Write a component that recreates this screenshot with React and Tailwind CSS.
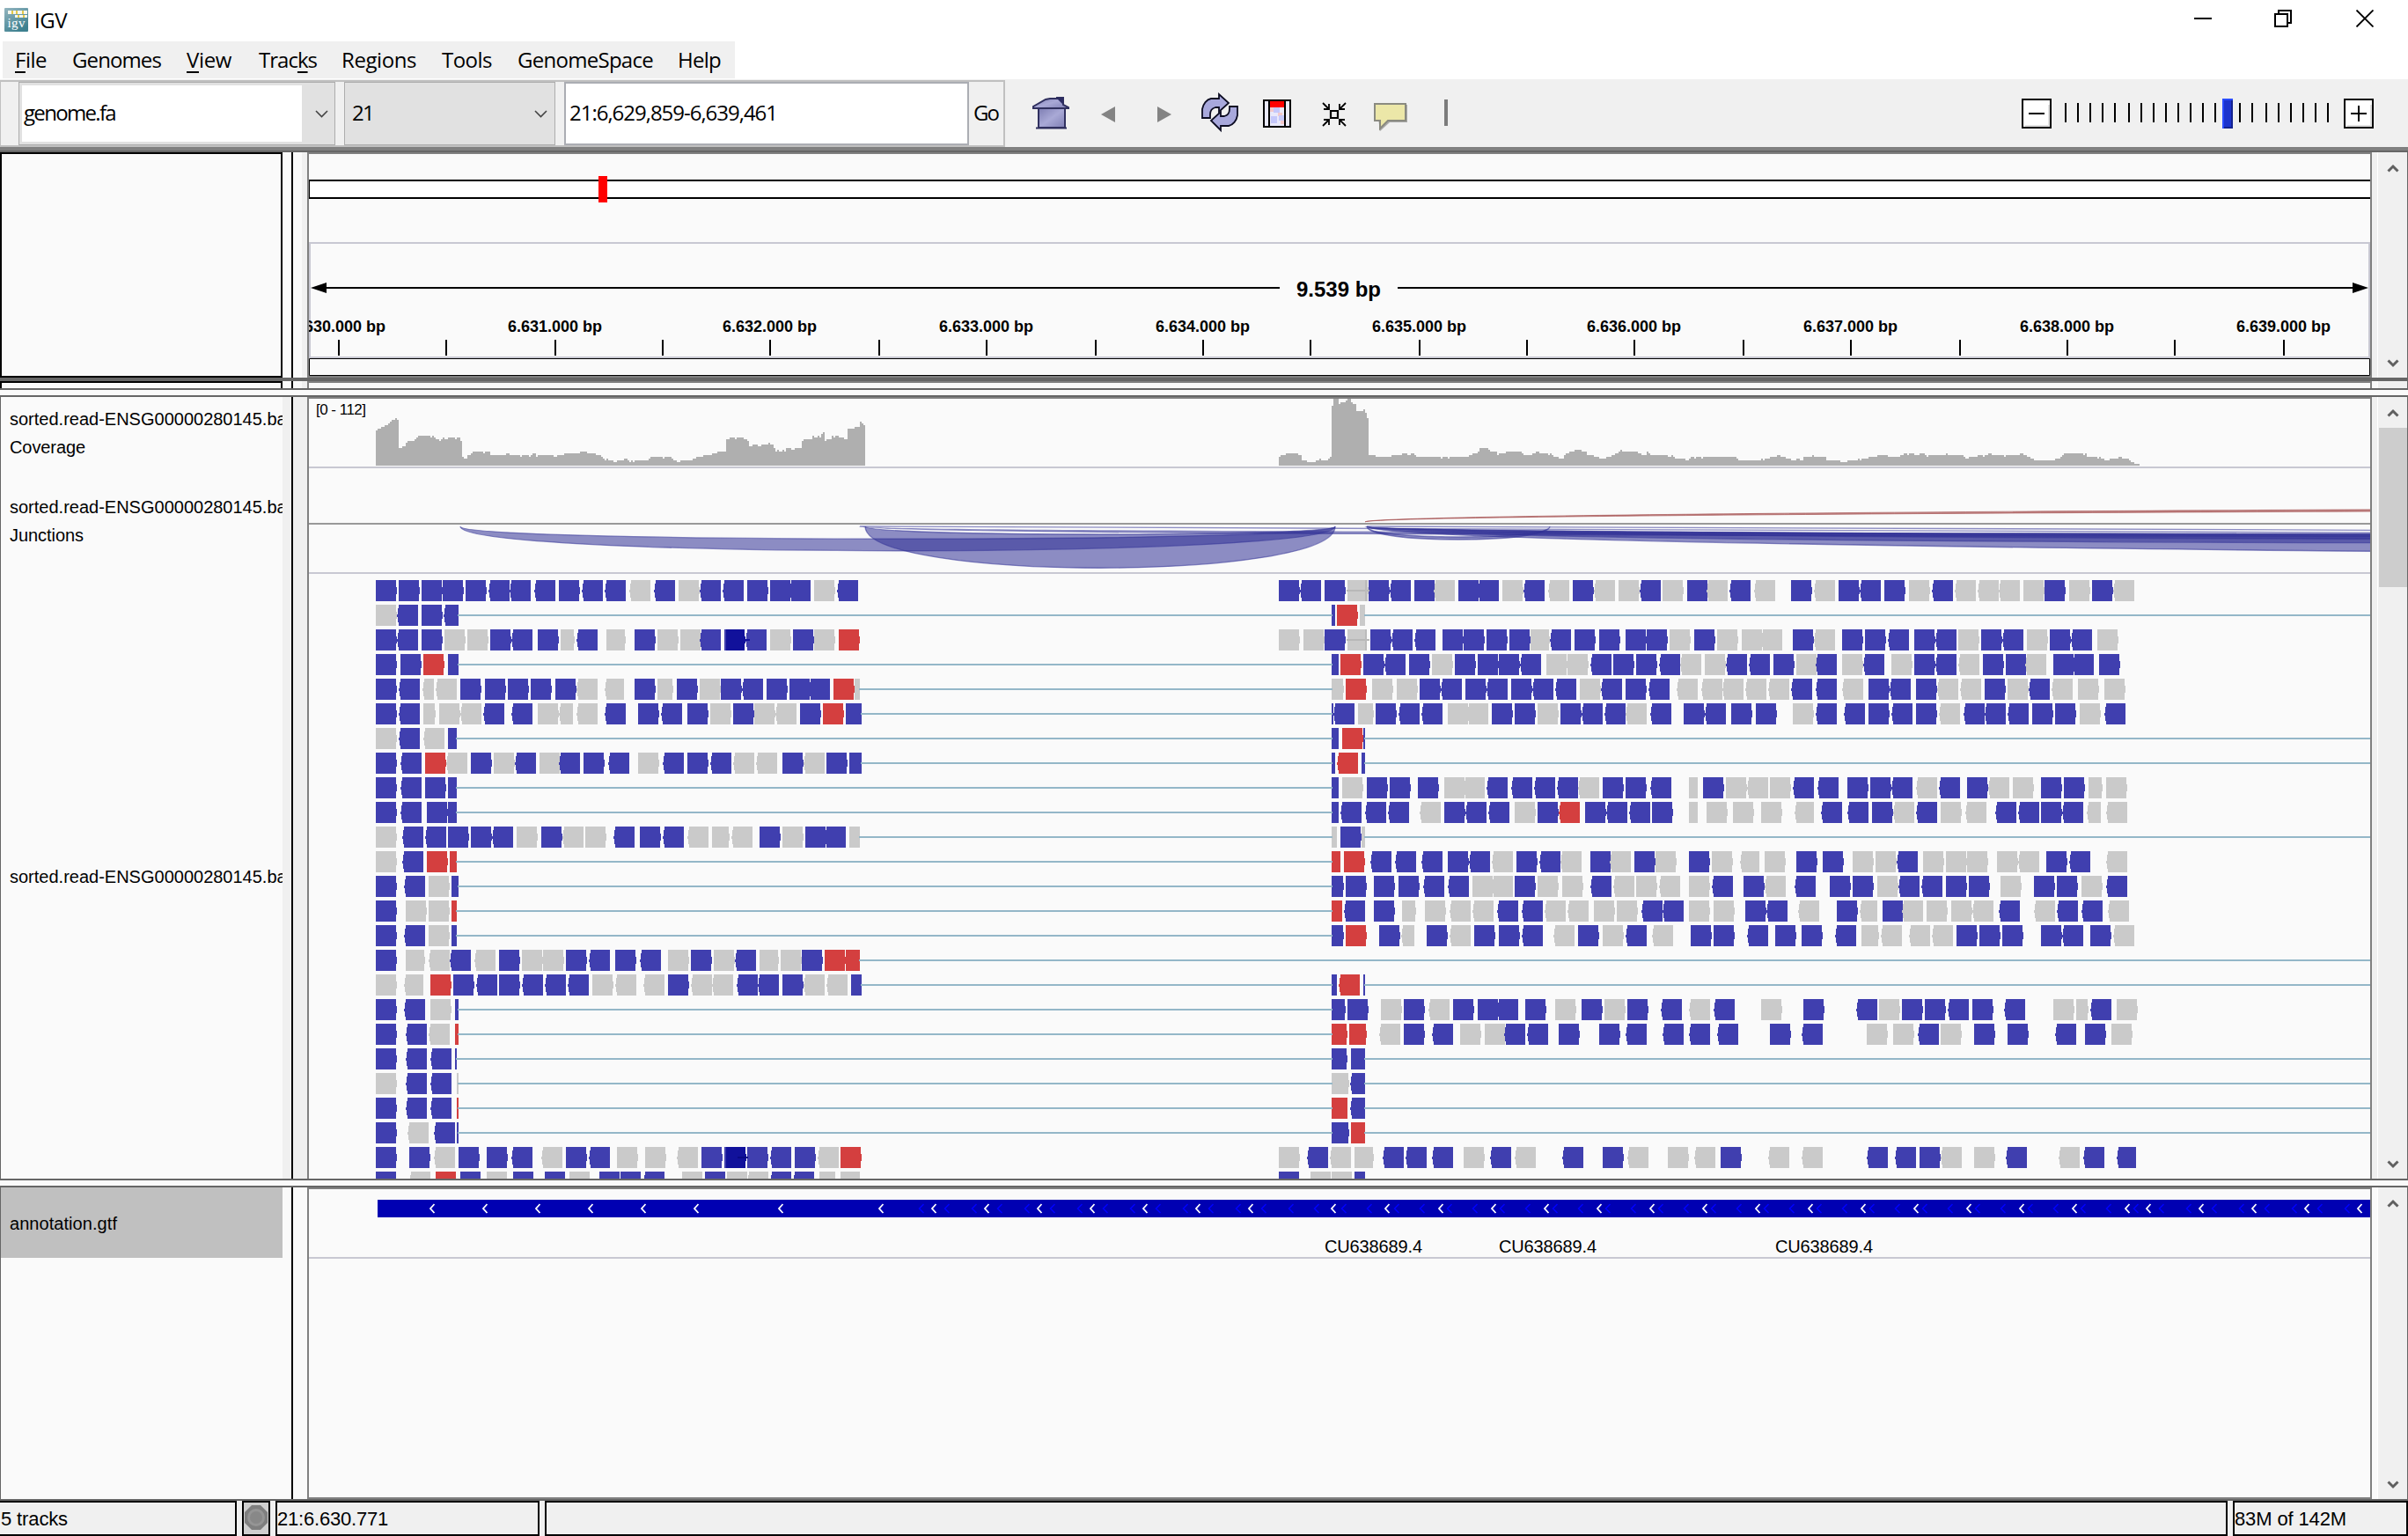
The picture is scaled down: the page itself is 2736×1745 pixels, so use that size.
import React, { useLayoutEffect, useRef } from "react";

const UI = "font-['Open_Sans','Noto_Sans',sans-serif]";
const ARIAL = "font-['Liberation_Sans',Arial,sans-serif]";

/* Text tracked so that its advance equals w pixels. */
function Fit({ w, className = "", children }) {
  const ref = useRef(null);
  useLayoutEffect(() => {
    const el = ref.current;
    const fit = () => {
      el.style.letterSpacing = "0px";
      const n = el.textContent.length;
      el.style.letterSpacing = (w - el.getBoundingClientRect().width) / n + "px";
    };
    fit();
    document.fonts?.ready.then(fit);
  }, [w]);
  return (
    <span ref={ref} className={"inline-block whitespace-pre " + className}>
      {children}
    </span>
  );
}

/* ---------- alignment data ---------- */
/* Token: colour (g grey, r red, k dark, none blue), start, strand (> < or | for a clipped read), end. */
const LEFT = [
  "18> 86> 154> 217> 285> <416 <478 <551 562> <693 <760 g<834 <907 g917> <1043 <1111 1121> 1189> <1309 g1320> <1450",
  "g18> <144 154> 219<264",
  "18> <144 154> g222> g290> 358> <483 499> g567>608 <677 g703>760 787> g855> g923> <1043 1053|1058 k1058>1117 <1179 g1189> 1257> g1320> r1393>",
  "18> 91> r159> 233|264",
  "18> <149 g156<191 g<259 269> 342> 410> 478> 551> g<677 g699<755 787> g855>902 912> g980> 1043> <1168 1179> 1247> <1367 r1377> g1440|1456",
  "18> <149 g159>196 g206> g<332 <400 <483 g499> g563<604 g<677 <760 797> <928 943> g1011> 1079> g1142> g<1267 1278> r1346> 1414|1461",
  "g18> <149 g<222 233|259",
  "18> <154 r165> g<290 301> g368> <494 g504> <625 635> <771 g797> <933 943> <1074 g<1142 g<1210 1226> g<1351 1356> 1424|1461",
  "18> <154 165> 233|259",
  "18> <154 170> 233|259",
  "g18> <159 <227 233> 301> <426 g436> 510> g<635 g640> <787 802> <933 g<1006 g1017>1069 g<1137 1158> g1226> 1294> <1414 g1424|1456",
  "g18> <159 r170> r238|259",
  "18> <165 g175> 243|264",
  "18> g107> g175> r243|259",
  "18> <165 g175> 243|259",
  "18> g107>164 g<238 <301 g<374 384> g452> g515> 583> <713 729> <865 g886> 954> g1022> <1147 g1158>1215 g1220> 1283> r1351> r1414|1456",
  "g18> g103<159 r180> 248> <379 384> <515 <583 <651 g661> g<792 g<875 886> g<1017 g<1079 <1152 <1215 1226> g<1351 g<1419 1429|1461",
  "18> <165 g180> 253|264",
  "18> <170 g<238 r253|264",
  "18> <170 <243 253|259",
  "g18> <170 <243 g259|264",
  "18> <170 <243 r259|264",
  "18> g<175 <253 259|264",
  "18> 118> g<253 264> 348> <483 g<572 583> <713 g734> g818> g<975 985> 1053|1058 k1058>1119 1121> <1252 1262> g<1393 r1398>",
  "18> g<180 r196> 268> g348> 426> 520> g593> 682> 745> <875 g928> 996> g1061> g<1184 <1252 <1320 g1335>1385 g1397|1456",
];
const MIDDLE = [
  "39> <183 195> g273> 345> <489 501> g<639 651> <789 g801> <945 g<1029 1041> g<1185 g1197> <1341 g1347> 1431>",
  "219|231 r237> g315|333",
  "g39> g123> 195> g273|339 351> <495 <573 597> 669> 747> 825> g897>963 <1035 1047> 1131> 1221> 1293> g1371> 1455>",
  "219|243 r249> 327> <471 483> g561> 639> 717> 789> <933 g951> g1023> <1173 1179> 1257> <1407 g<1479 g1491>",
  "g219>261 r267> g357> g441> 519> <663 675> <819 831> <975 <1053 g1065> <1209 1221> <1371 g<1467",
  "219|225 <297 g309>363 369> <519 <597 g615> g<753 765> 843> g921> 999> <1143 <1221 g<1293 <1377 1419>",
  "219|243 r255> 327|333",
  "219|231 r<309 321|333",
  "219|243 g255> 339> 417> 513> g603> g<741 <819 <903 <981 <1059 g<1131 1143> 1221> <1377 g1437|1467 1485>",
  "219|243 <321 <405 <483 g<591 603> <747 <825 g843> 921> r<1065 1083> <1227 <1305 1311> g1437|1467 g1497>",
  "g219|237 249> g321|333",
  "r219|249 r261> <423 <507 <597 615> <759 g<837 849> <999 g<1071 1101> g<1239 1251> g1323> 1437> g1515>",
  "219>261 267> 363> 447> <603 <687 g699> g<837 843> g921> g1005> <1173 g<1251 g1257> g<1407 g1437>",
  "r219|255 <333 363> g459>507 g537> g<693 g<771 <855 <939 g<1017 g<1095 g1113> g1191> <1347 <1419 g1437>",
  "219>261 r267> 381> g456<501 543> g<693 705> 789> <939 g<1047 1059> g1143> <1293 g<1383 1443>",
  "",
  "219|237 r<315 327|333",
  "219>267 273> g387> 465> g<621 633> 717> <855 879> g981> 1071> g1149> 1227> <1413 g<1509",
  "r219>273 r279>339 g<453 465> <633 g657> g741> <879 <957 993> 1131> <1293 <1419 <1509",
  "219>273 285|333",
  "g219>279 282<333",
  "r219|273 282<333",
  "219>279 r285|333",
  "g39> <207 g<285 g297>363 <465 <543 <633 g669> <831 g<915 <1077 1143> g<1299 g1365> g<1527",
  "39> g147> g219> 297|333",
];
const RIGHT = [
  "g<69 <147 g<231 285> g<435 447> <591 603> g687> <837 g<915 g<993 g<1065 g1077> 1149> g1233> 1311> g<1455",
  "",
  "g33> g117> g<255 291> g<435 459> 537> <687 705> <849 g855> 933> <1077 g1089> 1167> <1311 g1329>",
  "<135 <213 225> g303> <441 g459> <603 g627> 705> <849 g<927 939> 1017> g<1155 1179> <1317 1335>",
  "g<51 g<123 g<201 g<279 <357 <441 g<531 549> <693 711> g<855 g<933 945> g1023> <1167 g<1245 g1263> g1353>",
  "<63 81> 165> g291> <441 <537 549> <699 711> g<861 <945 <1017 <1095 1107> 1185> g1269> <1425",
  "",
  "",
  "g63> g<207 g213> <363 <447 477> 555> <699 g<783 <861 885> g<1029 g1041> 1137> 1215> g1299>1347 g1359>",
  "g87> g183> g297<363 <459 <549 561> g<705 <783 g795> g<951 <1053 <1131 1137> <1281 g1293<1341 g<1431",
  "",
  "g111<177 g195> 303> 393> g495> g573> <717 g735> g813> g885> g987> g<1131 1155> <1305 g<1431",
  "<87 123> g<267 <369 417> 495> g579> <723 <801 813> 891> g999> 1113> 1191> g1275> <1431",
  "g21> 129> <273 g<381 441> g519<579 597> g<735 g747> g831> g<975 <1065 g<1185 <1263 <1347 g<1437",
  "21> <207 231> 321> <507 g525>585 g<663 g<759 g<837 849> 927> 1005> 1137> <1281 1305> g<1455",
  "",
  "",
  "<93 g183> 327> <579 g585> 663> 741> <891 903> <1083 g1179> g1257>1299 <1377 g1395>",
  "<105 213> <393 g543> g633> <789 g795> 909> 1023> <1257 1287> g1377>",
  "",
  "",
  "",
  "",
  "45> g<279 g<393 <615 <711 723> g<867 g909> <1089 g<1269 <1353 1395<1461",
  "",
];
const OPEN_RIGHT = [1, 6, 7, 10, 16, 19, 20, 21, 22];
const NO_SPLICE = [0, 2, 23, 24];

const toLeft = (v) => Math.round(420 + v / 2.6133);
const toMiddle = (v) => Math.round(1440 + v / 3);
const toRight = (v) => Math.round(1940 + v / 3);
const FILL = { "": "#403faf", g: "#cacaca", r: "#d43f3f", k: "#11119b" };

function parseReads(row, map) {
  return row
    .split(" ")
    .filter(Boolean)
    .map((tok) => {
      const [, c, a, d, b] = tok.match(/^([grk]?)(\d*)([><|])(\d*)$/);
      const x0 = a ? map(+a) : map(+b) - 24;
      const x1 = b ? map(+b) : x0 + 24;
      return { c, d, x0, x1 };
    });
}

function readPath({ x0, x1, d }, y) {
  if (d === "|") return `M${x0} ${y}H${x1}V${y + 24}H${x0}Z`;
  if (d === ">")
    return `M${x0} ${y}H${x1 - 1}V${y + 8}H${x1}V${y + 16}H${x1 - 1}V${y + 24}H${x0}Z`;
  return `M${x0 + 2} ${y}H${x1}V${y + 24}H${x0 + 2}V${y + 20}H${x0 + 1}V${y + 14}H${x0}V${y + 11}H${x0 + 1}V${y + 4}H${x0 + 2}Z`;
}

function Alignments() {
  return (
    <g>
      {LEFT.map((row, i) => {
        const y = 659 + 28 * i;
        const left = parseReads(row, toLeft);
        const reads = [...left, ...parseReads(MIDDLE[i], toMiddle), ...parseReads(RIGHT[i], toRight)];
        const end = left[left.length - 1].x1 - 1;
        return (
          <g key={i}>
            {reads.map((r, k) => (
              <path key={k} d={readPath(r, y)} fill={FILL[r.c]} />
            ))}
            {!NO_SPLICE.includes(i) && (
              <rect x={end} y={y + 11} width={(i === 15 ? 2693 : 1514) - end} height="2" fill="#94b7c8" />
            )}
            {OPEN_RIGHT.includes(i) && <rect x="1550" y={y + 11} width="1143" height="2" fill="#94b7c8" />}
          </g>
        );
      })}
      <rect x="1530" y="670" width="26" height="2" fill="#b8b8b8" />
      <rect x="1530" y="726" width="26" height="2" fill="#b8b8b8" />
      <rect x="1551" y="659" width="2" height="24" fill="#bbbbbb" />
      <rect x="1551" y="715" width="2" height="24" fill="#bbbbbb" />
      <rect x="845" y="726" width="7" height="2" fill="#11119b" />
      <rect x="838" y="1314" width="12" height="2" fill="#0a0a85" />
    </g>
  );
}

/* ---------- coverage ---------- */
const COV_A =
  "18 147 24 141 34 135 44 129 55 123 60 117 66 111 76 105 81 111 86 207 97 201 107 189 112 183 133 177 139 171 144 165 181 171 186 165 191 171 196 177 206 183 212 177 217 171 222 177 233 171 254 177 259 171 269 183 274 237 280 243 290 231 301 225 306 219 337 225 342 219 358 231 405 225 416 231 447 237 452 231 473 237 478 231 483 225 494 237 499 231 546 237 557 231 578 225 625 219 645 225 672 231 687 237 693 243 698 249 703 243 708 249 724 255 734 249 755 243 766 249 771 255 776 249 781 255 787 249 829 243 834 237 870 243 876 237 896 243 902 249 912 255 922 249 959 243 970 237 990 231 1017 225 1032 219 1058 177 1069 171 1085 177 1090 171 1111 177 1121 183 1126 201 1137 195 1152 201 1163 195 1184 189 1189 195 1199 207 1205 219 1210 213 1215 219 1226 213 1231 219 1236 207 1252 213 1262 207 1283 183 1288 177 1315 165 1320 171 1330 165 1335 171 1341 159 1346 153 1351 183 1356 177 1372 165 1377 171 1382 165 1393 171 1409 177 1419 141 1440 135 1456 117 1461 123 1466 129 1471 267";
const COV_B =
  "39 237 45 231 63 225 105 231 117 249 135 255 165 249 177 243 183 249 207 243 213 237 219 63 225 39 243 57 249 51 267 45 273 39 285 51 291 57 303 81 327 75 333 87 339 105 345 231 369 237 423 231 459 225 477 231 489 225 501 231 507 237 591 243 597 237 615 243 621 237 687 231 699 225 717 219 723 207 753 213 759 219 783 231 789 225 813 219 867 225 873 231 903 225 915 219 927 225 957 231 963 225 969 231 975 237 993 243 1011 231 1017 225 1029 219 1047 213 1071 219 1089 231 1113 237 1131 243 1155 237 1173 231 1185 225 1197 219 1203 213 1209 219 1263 225 1275 231 1293 219 1299 225 1305 231 1365 237 1377 231 1383 237 1389 243 1425 249 1437 243 1443 237 1455 243 1461 237 1479 243 1485 237";
const COV_C =
  "99 243 105 249 183 243 189 249 195 243 213 237 237 231 249 237 267 243 285 249 303 243 315 249 327 237 357 231 363 237 405 249 453 255 477 249 513 243 519 249 525 243 549 237 579 231 615 237 657 231 669 225 681 231 687 225 705 231 723 225 741 231 747 237 753 231 813 225 819 231 873 237 879 243 891 237 921 231 939 237 945 231 957 225 969 231 1011 237 1017 231 1065 225 1077 231 1089 237 1101 243 1113 249 1185 243 1203 237 1209 231 1215 225 1281 231 1287 225 1293 237 1329 243 1335 237 1341 243 1353 249 1371 243 1401 237 1413 243 1437 249 1443 255 1455 261 1473 267";

function coveragePoints(str, map) {
  const n = str.split(" ").map(Number);
  const out = [];
  for (let i = 0; i < n.length; i += 2) out.push([map(n[i]), 440 + n[i + 1] / 3]);
  return out;
}
function coveragePath(points) {
  return `M${points[0][0]} 529` + points.map(([x, y]) => `H${x}V${y}`).join("") + "V529Z";
}

/* ---------- splice junctions ---------- */
function arc(x0, x1, inner, outer, y = 598) {
  return `M${x0} ${y}C${x0} ${y + outer} ${x1} ${y + outer} ${x1} ${y}C${x1} ${y + inner} ${x0} ${y + inner} ${x0} ${y}Z`;
}
const ARCS = [
  [523, 1517, 19, 37],
  [983, 1517, 12, 63],
  [977, 4600, 10, 15],
  [1553, 1761, 16, 20],
  [1553, 9553, 20, 52],
  [1553, 4153, 12, 25],
  [1551, 5000, 13, 20],
];

/* ---------- gene features ---------- */
const WHITE_MARKS = [491, 551, 611, 671, 731, 791, 887, 1001, 1061, 1121, 1181, 1241, 1301, 1361, 1421, 1515, 1576, 1637, 1697, 1757, 1817, 1877, 1937, 1997, 2057, 2117, 2177, 2237, 2297, 2357, 2417, 2441, 2501, 2561, 2621, 2681];
const BLUE_MARKS = Array.from({ length: 28 }, (_, i) => [1047 + 60 * i, 1076 + 60 * i])
  .flat()
  .filter((x) => x < 2690);

/* ---------- small parts ---------- */
function Chevron({ up }) {
  return (
    <svg width="14" height="10" viewBox="0 0 14 10" fill="none" stroke="#606060" strokeWidth="3">
      <path d={up ? "M1.5 8.5L7 3l5.5 5.5" : "M1.5 1.5L7 7l5.5-5.5"} />
    </svg>
  );
}
function ComboArrow() {
  return (
    <svg width="15" height="9" viewBox="0 0 15 9" fill="none" stroke="#444" strokeWidth="1.6">
      <path d="M1 1l6.5 6.5L14 1" />
    </svg>
  );
}
function ScrollBar({ thumb, light }) {
  return (
    <div className="flex w-[41px] shrink-0">
      <div className={"w-[6px] " + (light ? "bg-[#fafafa]" : "bg-[#f0f0f0]")} />
      <div className="w-px bg-white" />
      <div className="flex flex-1 flex-col items-center justify-between bg-[#f0f0f0] pt-[13px] pb-[11px]">
        <div className="flex flex-col items-center gap-[12px]">
          <Chevron up />
          {thumb && <div className="h-[181px] w-[32px] bg-[#cdcdcd]" />}
        </div>
        <Chevron />
      </div>
      <div className="w-px bg-[#666]" />
    </div>
  );
}
function Gutter({ a, b }) {
  return (
    <>
      <div className={"w-[10px] shrink-0 " + a} />
      <div className="w-[2px] shrink-0 bg-black" />
      <div className={"w-[10px] shrink-0 " + b} />
      <div className="w-[6px] shrink-0 bg-[#f0f0f0]" />
    </>
  );
}
function Divider() {
  return <div className="h-[10px] shrink-0 border-y-2 border-[#666] bg-[#fafafa]" />;
}

const MENU = [
  { w: 36, t: [["F", 1], ["ile"]], gap: "ml-[14px]" },
  { w: 101, t: [["Genomes"]], gap: "ml-[29px]" },
  { w: 51, t: [["V", 1], ["iew"]], gap: "ml-[29px]" },
  { w: 66, t: [["Trac"], ["k", 1], ["s"]], gap: "ml-[31px]" },
  { w: 85, t: [["Regions"]], gap: "ml-[28px]" },
  { w: 57, t: [["Tools"]], gap: "ml-[29px]" },
  { w: 154, t: [["GenomeSpace"]], gap: "ml-[29px]" },
  { w: 49, t: [["Help"]], gap: "ml-[28px]" },
];

const SLIDER = [2346, 2360, 2374, 2388, 2402, 2418, 2432, 2446, 2460, 2474, 2488, 2502, 2516, 2544, 2558, 2574, 2588, 2602, 2616, 2630, 2644];
const TICKS = [384, 506, 630, 752, 874, 998, 1120, 1244, 1366, 1488, 1612, 1734, 1856, 1980, 2102, 2226, 2348, 2470, 2594];
const TICK_LABELS = ["6.630.000 bp", "6.631.000 bp", "6.632.000 bp", "6.633.000 bp", "6.634.000 bp", "6.635.000 bp", "6.636.000 bp", "6.637.000 bp", "6.638.000 bp", "6.639.000 bp"];

function TitleBar() {
  return (
    <div className="flex h-[47px] items-start bg-white pl-[5px]">
      <svg className="mt-[9px]" width="27" height="27" viewBox="0 0 27 27">
        <defs>
          <linearGradient id="logo" x1="0" y1="0" x2="0.6" y2="1">
            <stop offset="0" stopColor="#94b5bf" />
            <stop offset="1" stopColor="#3d808f" />
          </linearGradient>
        </defs>
        <rect width="27" height="27" rx="1" fill="url(#logo)" />
        <g fill="#f4f6ee">
          <rect x="4" y="3" width="22" height="4" />
          <rect x="12" y="8" width="14" height="3" />
        </g>
        <g fill="#e3c94a">
          <rect x="8" y="3" width="2" height="4" />
          <rect x="13" y="3" width="2" height="4" />
          <rect x="20" y="3" width="2" height="4" />
          <rect x="15" y="8" width="2" height="3" />
          <rect x="21" y="8" width="2" height="3" />
        </g>
        <text x="3.500" y="21.500" fontFamily="Liberation Serif" fontSize="15" fill="#fff" textLength="20">igv</text>
      </svg>
      <div className={"mt-[6px] ml-[7px] text-[24px] leading-[33px] text-black " + UI}>
        <Fit w={37}>IGV</Fit>
      </div>
      <div className="flex-1" />
      <svg className="mt-[11px] mr-[39px]" width="204" height="20" viewBox="0 0 204 20" fill="none" stroke="#000" strokeWidth="2">
        <path d="M0 10H20" />
        <path d="M92 5h14v14h-14zM96 5V1h14v14h-4" />
        <path d="M184.500 .5l19 19M203.500 .5l-19 19" strokeWidth="1.800" />
      </svg>
    </div>
  );
}

function MenuBar() {
  return (
    <div className="flex h-[43px] bg-white pl-[3px]">
      <div className={"flex h-[42px] w-[832px] bg-[#f0f0f0] text-[24px] leading-[33px] text-black " + UI}>
        {MENU.map((m, i) => (
          <div key={i} className={"pt-[4px] " + m.gap}>
            <Fit w={m.w}>
              {m.t.map(([s, u], k) => (
                <span key={k} className={u ? "underline decoration-2 underline-offset-[4px]" : ""}>{s}</span>
              ))}
            </Fit>
          </div>
        ))}
      </div>
    </div>
  );
}

function ToolIcons() {
  return (
    <svg width="500" height="50" viewBox="1160 103 500 50" className="ml-[18px]">
      <defs>
        <linearGradient id="lav" x1="0" y1="0" x2="1" y2="1">
          <stop offset="0" stopColor="#7d7db2" />
          <stop offset=".5" stopColor="#a9a9d6" />
          <stop offset="1" stopColor="#7f7fb4" />
        </linearGradient>
      </defs>
      <path d="M1180 123h30v22h-30z" fill="url(#lav)" stroke="#30305f" strokeWidth="2" />
      <path d="M1174 123v-2l14-8 5-1h8v-1h7v8l6 3v1z" fill="url(#lav)" stroke="#30305f" strokeWidth="2" />
      <path d="M1200 111h8v8z" fill="#2b2b62" />
      <path d="M1177 145.500h35" stroke="#30305f" strokeWidth="2" />
      <path d="M1267 121v18l-16-9z" fill="#838383" />
      <path d="M1315 121v18l16-9z" fill="#838383" />
      <g fill="#a8a8dc" stroke="#0c0c22" strokeWidth="1.800">
        <path d="M1366 134v-10c1-6 5-11 10-12h9v-5l11 10-11 10v-5h-4c-4 1-6 4-6 8v4z" />
        <path d="M1406 121v10c-1 6-5 11-10 12h-9v5l-11-11 11-10v5h4c4-1 6-4 6-8v-3z" />
      </g>
      <path d="M1436 114h30v30h-30z" fill="#e9e9fb" stroke="#000" strokeWidth="2" />
      <path d="M1443 122h4v5h-4zM1452 128h5v4h-5zM1455 137h5v4h-5z" fill="#f3c9cc" />
      <path d="M1447 122h7v6h-7zM1444 132h7v8h-7zM1453 131h6v6h-6z" fill="#c5c8fb" />
      <path d="M1443 115h16v7h-16z" fill="#f00" />
      <path d="M1442 114v30M1460 114v30" stroke="#000" strokeWidth="2" />
      <g stroke="#000" strokeWidth="1.800" fill="none">
        <path d="M1512 126h8v8h-8z" strokeWidth="2.200" />
        <path d="M1503 117l7 7M1529 117l-7 7M1503 143l7-7M1529 143l-7-7" />
        <path d="M1504 124h6v-6M1528 124h-6v-6M1504 136h6v6M1528 136h-6v6" />
      </g>
      <path d="M1564 119h35v20h-20l-11 10z" fill="#a9a9a9" />
      <path d="M1562 118h35v19h-20l-9 9v-9h-6z" fill="#ece7a8" stroke="#8a8a80" strokeWidth="2" />
      <path d="M1641 113h4v30h-4z" fill="#7c7c7c" />
    </svg>
  );
}

function Toolbar() {
  return (
    <div className="flex h-[77px] bg-[#f0f0f0] pt-px">
      <div className={"flex h-[76px] w-[1142px] border-2 border-l-1 border-[#c0c0c0] bg-[#f0f0f0] pl-[20px] text-[24px] leading-[33px] text-black " + UI}>
        <div className="flex w-[360px] items-center border border-[#adadad] bg-[#e1e1e1] pl-[3px]">
          <div className="flex h-[64px] w-[318px] items-center bg-white pb-[3px] pl-[2px]">
            <Fit w={104}>genome.fa</Fit>
          </div>
          <div className="ml-[15px]"><ComboArrow /></div>
        </div>
        <div className="ml-[10px] flex w-[240px] items-center border border-[#adadad] bg-[#e1e1e1] pl-[8px]">
          <Fit w={24} className="mb-[3px]">21</Fit>
          <div className="flex-1" />
          <div className="mr-[8px]"><ComboArrow /></div>
        </div>
        <div className="ml-[10px] flex w-[460px] items-center border-2 border-[#abadb3] bg-white pb-[3px] pl-[4px]">
          <Fit w={236}>21:6,629,859-6,639,461</Fit>
        </div>
        <div className="flex flex-1 items-center pb-[3px] pl-[5px]"><Fit w={28}>Go</Fit></div>
      </div>
      <div className="flex h-[74px] flex-1 items-center"><ToolIcons /></div>
      <svg className="mt-[21px] mr-[39px]" width="401" height="34" viewBox="2296 111 401 34">
        <path d="M2298 112h32v32h-32zM2664 112h32v32h-32z" fill="#fff" stroke="#000" strokeWidth="2" />
        <path d="M2301 142h27v-24M2667 142h27v-24" stroke="#e0e0e0" strokeWidth="2" fill="none" />
        <path d="M2305 128h18M2671 128h18M2680 119v18" stroke="#000" strokeWidth="2" />
        {SLIDER.map((x) => <rect key={x} x={x} y="116" width="2" height="22" />)}
        <path d="M2525 111h12v34h-12z" fill="#1c33cc" />
        <path d="M2526 145v-33h11" stroke="#2a4dff" strokeWidth="2" fill="none" />
        <path d="M2536 113v31h-9" stroke="#142390" strokeWidth="2" fill="none" />
      </svg>
    </div>
  );
}

function RulerPanel() {
  return (
    <div className="flex h-[256px]">
      <div className="w-[321px] shrink-0 border-2 border-black bg-[#fafafa]" />
      <Gutter a="bg-[#fafafa]" b="bg-[#fafafa]" />
      <svg width="2346" height="256" viewBox="349 173 2346 256" className={"shrink-0 " + ARIAL}>
        <path d="M349 173H2695V429H349Z" fill="#808080" />
        <path d="M351 175H2693V427H351Z" fill="#fafafa" />
        <path d="M351 204H2693V226H351Z" />
        <path d="M352 206H2693V224H352Z" fill="#fff" />
        <path d="M680 200h10v30h-10z" fill="#f00" />
        <path d="M352 276H2692V406H352Z" fill="none" stroke="#c8c8d2" strokeWidth="2" />
        <path d="M360 326H1454v2H360zM1588 326H2680v2H1588z" />
        <path d="M353 327l18-6v12zM2691 327l-18-6v12z" />
        <text x="1473" y="337" fontSize="24" fontWeight="700" textLength="96">9.539 bp</text>
        {TICKS.map((x) => <rect key={x} x={x} y="386" width="2" height="18" />)}
        {TICK_LABELS.map((t, i) => (
          <text key={t} x={TICKS[i * 2] - 53} y="377" fontSize="18" fontWeight="700" textLength="107">{t}</text>
        ))}
        <path d="M349 360h2v40h-2z" fill="#808080" />
        <path d="M351.500 407.500H2692.500V426.500H351.500Z" fill="#fafafa" stroke="#000" />
      </svg>
      <ScrollBar />
    </div>
  );
}

function TrackPanel() {
  const bc = [...coveragePoints(COV_B, toMiddle), ...coveragePoints(COV_C, toRight)];
  return (
    <div className="flex h-[888px]">
      <div className="w-px shrink-0 bg-[#666]" />
      <div className={"w-[320px] shrink-0 overflow-hidden bg-[#fafafa] pl-[10px] text-[20px] leading-[32px] whitespace-nowrap text-black " + ARIAL}>
        <div className="mt-[9px]">sorted.read-ENSG00000280145.bam</div>
        <div><Fit w={86}>Coverage</Fit></div>
        <div className="mt-[36px]">sorted.read-ENSG00000280145.bam</div>
        <div><Fit w={84}>Junctions</Fit></div>
        <div className="mt-[356px]">sorted.read-ENSG00000280145.bam</div>
      </div>
      <Gutter a="bg-[#f0f0f0]" b="bg-[#f0f0f0]" />
      <svg width="2346" height="888" viewBox="349 451 2346 888" className={"shrink-0 " + ARIAL}>
        <path d="M349 451H2695V1339H349Z" fill="#808080" />
        <path d="M351 453H2693V1339H351Z" fill="#fafafa" />
        <text x="359" y="471" fontSize="17" textLength="57">[0 - 112]</text>
        <g fill="#afafaf" shapeRendering="crispEdges">
          <path d={coveragePath(coveragePoints(COV_A, toLeft))} />
          <path d={coveragePath(bc)} />
        </g>
        <path d="M351 530H2693v2H351zM351 650H2693v2H351z" fill="#c8c8d2" />
        <path d="M351 594H2693v2H351z" fill="#999" />
        <svg x="351" y="532" width="2342" height="118" viewBox="351 532 2342 118">
          <g fill="#323296" fillOpacity=".55" stroke="#323296" strokeOpacity=".55" strokeWidth="1.300">
            {ARCS.map(([a, b, i, o], k) => <path key={k} d={arc(a, b, i, o)} />)}
          </g>
          <path d={arc(1551, 9553, -22, -26, 593)} fill="#963232" fillOpacity=".55" stroke="#963232" strokeOpacity=".55" />
        </svg>
        <g shapeRendering="crispEdges"><Alignments /></g>
      </svg>
      <ScrollBar thumb />
    </div>
  );
}

function FeaturePanel() {
  return (
    <div className="flex h-[354px]">
      <div className="w-px shrink-0 bg-[#666]" />
      <div className="w-[320px] shrink-0 bg-[#fafafa]">
        <div className={"flex h-[80px] items-center bg-[#c0c0c0] pt-[2px] pl-[10px] text-[20px] leading-[32px] " + ARIAL}>
          <Fit w={122}>annotation.gtf</Fit>
        </div>
      </div>
      <div className="w-[10px] shrink-0 bg-[#fafafa]" />
      <div className="w-[2px] shrink-0 bg-black" />
      <div className="w-[16px] shrink-0 bg-[#fafafa]" />
      <svg width="2346" height="354" viewBox="349 1349 2346 354" className={"shrink-0 " + ARIAL}>
        <path d="M349 1349H2695V1703H349Z" fill="#808080" />
        <path d="M351 1351H2693V1701H351Z" fill="#fafafa" />
        <path d="M429 1363H2693v20H429z" fill="#0000b2" />
        {BLUE_MARKS.map((x) => <path key={x} d={`M${x + 2.500} 1368l-5 5 5 5`} stroke="#0000ff" strokeWidth="1.500" fill="none" />)}
        {WHITE_MARKS.map((x) => <path key={x} d={`M${x + 2.500} 1368l-4.500 5 4.500 5`} stroke="#fff" strokeWidth="1.800" fill="none" />)}
        <text x="1505" y="1423" fontSize="20" textLength="111">CU638689.4</text>
        <text x="1703" y="1423" fontSize="20" textLength="111">CU638689.4</text>
        <text x="2017" y="1423" fontSize="20" textLength="111">CU638689.4</text>
        <path d="M351 1428H2693v2H351z" fill="#c8c8d2" />
      </svg>
      <ScrollBar light />
    </div>
  );
}

function StatusBar() {
  const cell = "h-[40px] shrink-0 border-2 border-black bg-[#f0f0f0] pt-[3px] ";
  return (
    <div className={"flex h-[40px] gap-[6px] overflow-hidden bg-[#f0f0f0] text-[22px] leading-[32px] text-black " + ARIAL}>
      <div className={cell + "w-[269px] border-l-0 pl-px"}><Fit w={76}>5 tracks</Fit></div>
      <div className="flex h-[40px] w-[32px] shrink-0 items-center justify-center border-2 border-black bg-[#cfcfcf]">
        <svg width="28" height="32" viewBox="0 0 28 32">
          <path d="M9 1h10l8 8v12l-8 8H9l-8-8V9z" fill="#7f7f7f" />
          <circle cx="14" cy="15" r="10" fill="#959595" />
          <circle cx="14" cy="15" r="7" fill="#888" />
        </svg>
      </div>
      <div className={cell + "w-[300px]"}><Fit w={126}>21:6.630.771</Fit></div>
      <div className={cell + "w-[1912px]"} />
      <div className={cell + "w-[199px]"}><Fit w={127}>83M of 142M</Fit></div>
    </div>
  );
}

export default function App() {
  return (
    <div className="flex h-[1745px] w-[2736px] flex-col overflow-hidden bg-[#f0f0f0]">
      <TitleBar />
      <MenuBar />
      <Toolbar />
      <div className="h-[4px] shrink-0 bg-[#808080]" />
      <div className="h-[2px] shrink-0 bg-[#666]" />
      <RulerPanel />
      <div className="h-[4px] shrink-0 bg-[#666]" />
      <div className="flex h-[8px]">
        <div className="w-[321px] shrink-0 border-2 border-b-0 border-black bg-[#fafafa]" />
        <Gutter a="bg-[#fafafa]" b="bg-[#fafafa]" />
        <div className="w-[2346px] shrink-0 border-2 border-b-0 border-[#808080] bg-[#fafafa]" />
        <div className="w-[6px] bg-[#fafafa]" />
        <div className="w-px bg-white" />
        <div className="flex-1 bg-[#f0f0f0]" />
        <div className="w-px bg-[#666]" />
      </div>
      <Divider />
      <TrackPanel />
      <Divider />
      <FeaturePanel />
      <div className="h-[2px] shrink-0 bg-[#666]" />
      <StatusBar />
    </div>
  );
}
